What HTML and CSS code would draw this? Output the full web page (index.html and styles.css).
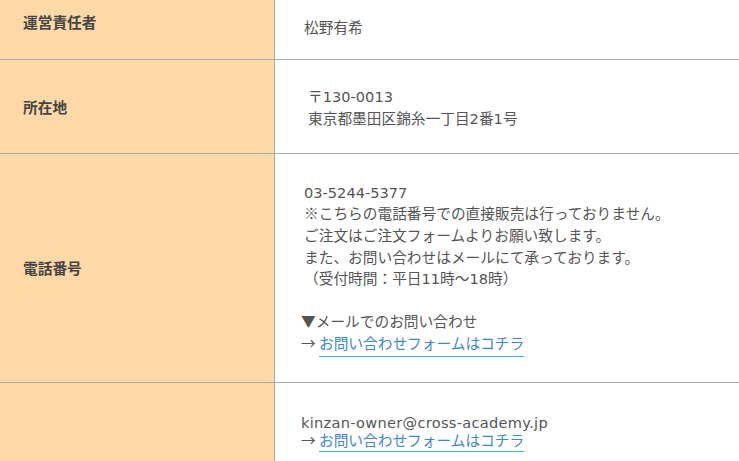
FILE: index.html
```html
<!DOCTYPE html>
<html lang="ja">
<head>
<meta charset="utf-8">
<title>会社概要</title>
<link rel="stylesheet" href="styles.css">
</head>
<body>
<div class="info">
  <div class="row r1">
    <div class="th">運営責任者</div>
    <div class="td">松野有希</div>
  </div>
  <div class="row r2">
    <div class="th">所在地</div>
    <div class="td"><div class="addr">〒<span class="en">130-0013</span><br>東京都墨田区錦糸一丁目<span class="en">2</span>番<span class="en">1</span>号</div></div>
  </div>
  <div class="row r3">
    <div class="th">電話番号</div>
    <div class="td">
      <div class="indent"><span class="en">03-5244-5377</span><br>※こちらの電話番号での直接販売は行っておりません。<br>ご注文はご注文フォームよりお願い致します。<br>また、お問い合わせはメールにて承っております。<br>（受付時間：平日<span class="en">11</span>時～<span class="en">18</span>時）</div>
      <div class="gap"></div>
      <div>▼メールでのお問い合わせ<br>→ <a class="link" href="#">お問い合わせフォームはコチラ</a></div>
    </div>
  </div>
  <div class="row r4">
    <div class="th">メールアドレス</div>
    <div class="td"><span class="en mail">kinzan-owner@cross-academy.jp</span><br>→ <a class="link" href="#">お問い合わせフォームはコチラ</a></div>
  </div>
</div>
</body>
</html>
```

FILE: styles.css
```css
* { box-sizing: border-box; }
html, body { margin: 0; padding: 0; background: #fff; }
body {
  font-family: "Noto Sans CJK JP", "Noto Sans", sans-serif;
  font-size: 14.7px;
  line-height: 21.6px;
  color: #555;
  overflow: hidden;
}
.en {
  font-family: "DejaVu Sans", "Noto Sans CJK JP", sans-serif;
  font-size: 14.6px;
  line-height: 0;
}
.mail { letter-spacing: 0.28px; }
.info { width: 739px; }
.row {
  display: grid;
  grid-template-columns: 275px 1fr;
  border-bottom: 1px solid #aaaaaa;
}
.th {
  background: #fed9a8;
  border-right: 1px solid #aaaaaa;
  padding-left: 23px;
  font-weight: bold;
  color: #444;
  display: flex;
  align-items: center;
}
.td { padding-left: 29px; }
.r1 .th { align-items: flex-start; padding-top: 11px; }
.r1 .td { padding-top: 16px; padding-bottom: 21.4px; }
.r2 .td { padding-top: 25px; padding-bottom: 24.6px; }
.addr { padding-left: 4px; }
.r3 .td { padding-top: 27px; padding-bottom: 28.2px; padding-left: 26px; }
.indent { padding-left: 3px; }
.gap { height: 21.6px; }
.r4 .th { color: transparent; }
.r4 .td { padding-top: 30px; padding-bottom: 40px; padding-left: 26px; line-height: 18px; }
.link {
  color: #3d86d8;
  text-decoration: none;
  border-bottom: 1px solid #4aa3e6;
  padding-bottom: 3px;
}
.r4 .link { padding-bottom: 1px; }
```
